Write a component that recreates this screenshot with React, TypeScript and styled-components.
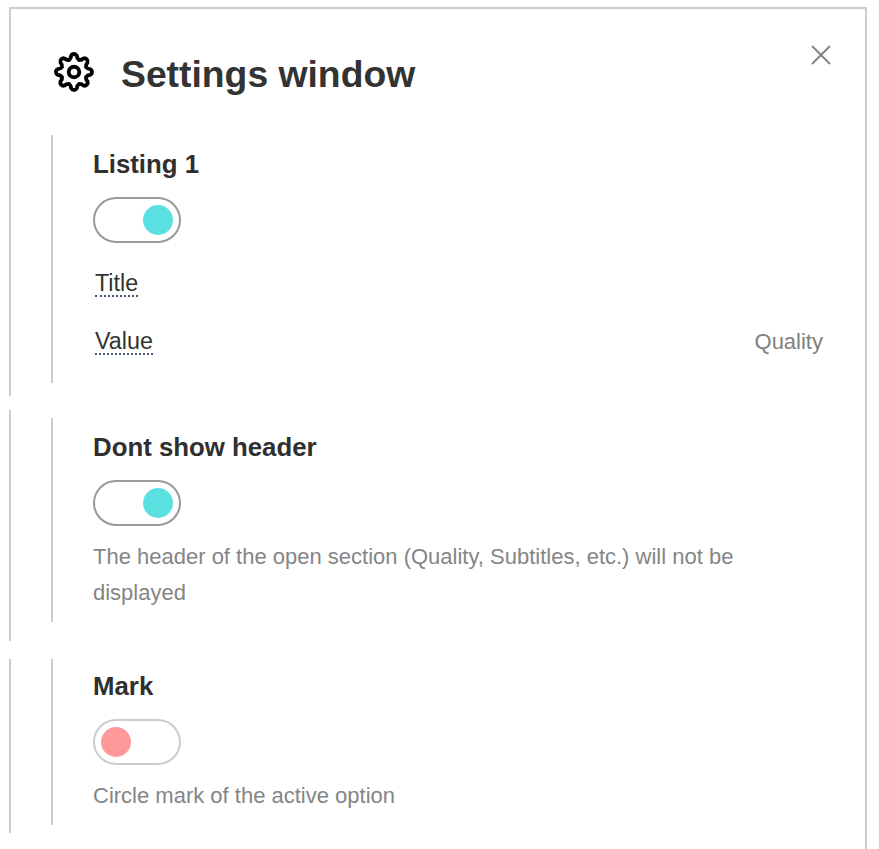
import React from "react";
import styled, { createGlobalStyle } from "styled-components";

const Global = createGlobalStyle`
  html, body { margin: 0; padding: 0; background: #fff; height: 849px; overflow: hidden; }
  body { font-family: "Liberation Sans", Arial, sans-serif; color: #333; }
`;

const Window = styled.div`
  box-sizing: border-box;
  width: 858px;
  height: 842px;
  margin: 7px 0 0 9px;
  border-top: 2px solid #ccc;
  border-right: 2px solid #ccc;
  position: relative;
`;

const Group = styled.div<{ $height: number; $top: number }>`
  box-sizing: border-box;
  display: flow-root;
  height: ${(p) => p.$height}px;
  margin-top: ${(p) => p.$top}px;
  border-left: 2px solid #ccc;
`;

const Header = styled.header`
  display: flex;
  align-items: center;
  height: 126px;
  padding: 0 0 1px 41px;
  box-sizing: border-box;
`;

const Gear = styled.svg`
  width: 44px;
  height: 44px;
  flex: none;
  margin-right: 25px;
`;

const Title = styled.h1`
  margin: 4px 0 0;
  font-size: 37.3px;
  line-height: 44px;
  font-weight: 700;
  color: #333;
`;

const Close = styled.svg`
  position: absolute;
  top: 36px;
  right: 34px;
  width: 20px;
  height: 20px;
`;

const Section = styled.section<{ $top: number; $height: number; $pad: number }>`
  box-sizing: border-box;
  margin: ${(p) => p.$top}px 0 0 40px;
  height: ${(p) => p.$height}px;
  border-left: 2px solid #ccc;
  padding: ${(p) => p.$pad}px 42px 0 40px;
`;

const Heading = styled.h2`
  margin: 0;
  font-size: 25.8px;
  line-height: 30px;
  font-weight: 700;
  color: #2f2f2f;
`;

const Toggle = styled.div<{ $on: boolean }>`
  box-sizing: border-box;
  width: 88px;
  height: 46px;
  margin-top: 18px;
  border-radius: 23px;
  border: 2px solid ${(p) => (p.$on ? "#999" : "#ccc")};
  display: flex;
  align-items: center;
  justify-content: ${(p) => (p.$on ? "flex-end" : "flex-start")};
  padding: 0 6px;
`;

const Knob = styled.span<{ $on: boolean }>`
  display: block;
  width: 30px;
  height: 30px;
  border-radius: 50%;
  background: ${(p) => (p.$on ? "#5ae0e0" : "#ff9999")};
`;

const Row = styled.div<{ $top: number }>`
  display: flex;
  justify-content: space-between;
  align-items: flex-start;
  margin-top: ${(p) => p.$top}px;
  padding-left: 2px;
  font-size: 23.3px;
`;

const Label = styled.span`
  box-sizing: border-box;
  height: 28px;
  padding-top: 2px;
  color: #333;
  line-height: 24px;
  border-bottom: 2px dotted #46557a;
`;

const RowValue = styled.span`
  height: 28px;
  line-height: 30px;
  color: #808080;
  font-size: 22px;
`;

const Description = styled.p`
  margin: 13px 0 0;
  font-size: 22px;
  line-height: 36px;
  color: #858585;
`;

function polar(deg: number, r: number) {
  const a = ((deg - 90) * Math.PI) / 180;
  return `${(20 + r * Math.cos(a)).toFixed(2)} ${(20 + r * Math.sin(a)).toFixed(2)}`;
}

const gearPath = (() => {
  let d = `M${polar(-22.5, 11.8)}`;
  for (let k = 0; k < 8; k++) {
    const t = k * 45;
    d += ` Q${polar(t - 13, 12.4)} ${polar(t - 10, 15)}`;
    d += ` A2.9 2.9 0 0 1 ${polar(t + 10, 15)}`;
    d += ` Q${polar(t + 13, 12.4)} ${polar(t + 22.5, 11.8)}`;
  }
  return d + "Z";
})();

function Setting({ title, on, text, top, height, pad, children }: {
  title: string; on: boolean; text?: string; top: number; height: number; pad: number; children?: React.ReactNode;
}) {
  return (
    <Section $top={top} $height={height} $pad={pad}>
      <Heading>{title}</Heading>
      <Toggle $on={on}><Knob $on={on} /></Toggle>
      {text && <Description>{text}</Description>}
      {children}
    </Section>
  );
}

export default function App() {
  return (
    <>
      <Global />
      <Window>
        <Close viewBox="0 0 20 20" fill="none" stroke="#808080" strokeWidth="1.8">
          <path d="M1 1l18 18M19 1L1 19" />
        </Close>
        <Group $height={387} $top={0}>
          <Header>
            <Gear viewBox="0 0 40 40" fill="none" stroke="#000" strokeWidth="3.5" strokeLinejoin="round">
              <path d={gearPath} />
              <circle cx="20" cy="20" r="4.8" />
            </Gear>
            <Title>Settings window</Title>
          </Header>
          <Setting title="Listing 1" on top={0} height={248} pad={14}>
            <Row $top={26}><Label>Title</Label></Row>
            <Row $top={30}><Label>Value</Label><RowValue>Quality</RowValue></Row>
          </Setting>
        </Group>
        <Group $height={231} $top={14}>
          <Setting title="Dont show header" on top={8} height={204} pad={14}
            text="The header of the open section (Quality, Subtitles, etc.) will not be displayed" />
        </Group>
        <Group $height={174} $top={18}>
          <Setting title="Mark" on={false} top={0} height={166} pad={12}
            text="Circle mark of the active option" />
        </Group>
      </Window>
    </>
  );
}
